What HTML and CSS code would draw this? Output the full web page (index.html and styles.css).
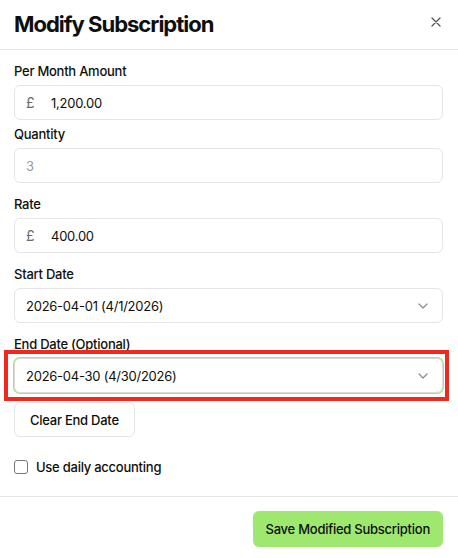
FILE: index.html
```html
<!DOCTYPE html>
<html lang="en">
  <head>
    <meta charset="utf-8">
    <meta name="viewport" content="width=device-width, initial-scale=1">
    <title>Modify Subscription</title>
    <link rel="stylesheet" href="styles.css">
  </head>
  <body>
    <div class="modal">
      <header class="modal-header">
        <h2>Modify Subscription</h2>
        <button class="close" aria-label="Close">
          <svg width="10" height="10" viewBox="0 0 10 10">
            <path d="M1 1 L9 9 M9 1 L1 9" stroke="currentColor" stroke-width="1.3" stroke-linecap="round"/>
          </svg>
        </button>
      </header>

      <div class="modal-body">
        <div class="field">
          <label>Per Month Amount</label>
          <div class="input">
            <span class="prefix">£</span>
            <span class="value">1,200.00</span>
          </div>
        </div>

        <div class="field field-tight">
          <label>Quantity</label>
          <div class="input">
            <span class="value muted">3</span>
          </div>
        </div>

        <div class="field">
          <label>Rate</label>
          <div class="input">
            <span class="prefix">£</span>
            <span class="value">400.00</span>
          </div>
        </div>

        <div class="field">
          <label>Start Date</label>
          <div class="input select">
            <span class="value">2026-04-01 (4/1/2026)</span>
            <svg class="chevron" width="10" height="6" viewBox="0 0 10 6">
              <path d="M1 1 L5 5 L9 1" fill="none" stroke="currentColor" stroke-width="1.2" stroke-linecap="round" stroke-linejoin="round"/>
            </svg>
          </div>
        </div>

        <div class="field">
          <label>End Date (Optional)</label>
          <div class="highlight">
            <div class="input select focused">
              <span class="value">2026-04-30 (4/30/2026)</span>
              <svg class="chevron" width="10" height="6" viewBox="0 0 10 6">
                <path d="M1 1 L5 5 L9 1" fill="none" stroke="currentColor" stroke-width="1.2" stroke-linecap="round" stroke-linejoin="round"/>
              </svg>
            </div>
          </div>
        </div>

        <button class="btn btn-secondary">Clear End Date</button>

        <label class="check">
          <span class="box"></span>
          Use daily accounting
        </label>
      </div>

      <footer class="modal-footer">
        <button class="btn btn-primary">Save Modified Subscription</button>
      </footer>
    </div>
  </body>
</html>
```

FILE: styles.css
```css
:root {
  font-family: Inter, "Noto Sans", sans-serif;
  color: #0e0f0c;
  font-size: 13px;
  letter-spacing: -0.25px;
}

body {
  margin: 0;
  padding: 0;
  background: #fff;
}

.modal {
  width: 458px;
  background: #fff;
}

.modal-header {
  display: flex;
  align-items: center;
  justify-content: space-between;
  height: 49px;
  padding: 0 14px;
  border-bottom: 1px solid #e6e6e6;
}
.modal-header h2 {
  margin: 0;
  font-size: 22px;
  font-weight: 700;
  letter-spacing: -1px;
  padding-bottom: 2px;
}
.close {
  border: none;
  background: none;
  padding: 0;
  margin-right: 3px;
  margin-bottom: 6px;
  color: #555;
  display: flex;
}

.modal-body {
  display: flex;
  flex-direction: column;
  align-items: flex-start;
  padding: 12px 15px 20px 14px;
}

.field {
  align-self: stretch;
  display: flex;
  flex-direction: column;
  gap: 5px;
  margin-bottom: 12px;
}
.field-tight {
  margin-top: -7px;
}
.field label {
  font-weight: 500;
  line-height: 18px;
}

.input {
  display: flex;
  align-items: center;
  height: 35px;
  box-sizing: border-box;
  padding: 0 12px 0 11px;
  border: 1px solid #e5e5e5;
  border-radius: 6px;
  background: #fff;
}
.prefix {
  color: #6a6c6a;
  width: 25px;
  font-size: 14px;
}
.muted {
  color: #9a9a9a;
}
.select {
  justify-content: space-between;
}
.chevron {
  color: #8b8b8b;
  margin-right: 2px;
}
.focused {
  box-shadow: 0 0 0 1px #9fe870;
  border-color: #dcdcdc;
}

/* red callout drawn around the end-date picker */
.highlight {
  position: relative;
}
.highlight::after {
  content: "";
  position: absolute;
  left: -10px;
  right: -6px;
  top: -8px;
  bottom: -8px;
  border: 4px solid #f0291c;
  pointer-events: none;
}

.btn {
  font-family: inherit;
  font-size: 13px;
  font-weight: 500;
  letter-spacing: -0.25px;
  color: #0e0f0c;
  height: 35px;
  border-radius: 6px;
  cursor: pointer;
}
.btn-secondary {
  margin-top: -3px;
  padding: 0 15px;
  background: #fff;
  border: 1px solid #e5e5e5;
}
.btn-primary {
  height: 36px;
  padding: 0 13px;
  background: #9fe870;
  border: none;
}

.check {
  display: flex;
  align-items: center;
  gap: 8px;
  margin-top: 21px;
  font-weight: 500;
  line-height: 18px;
}
.box {
  width: 14px;
  height: 14px;
  box-sizing: border-box;
  border: 1px solid #777;
  border-radius: 3px;
}

.modal-footer {
  display: flex;
  justify-content: flex-end;
  padding: 14px 15px 12px;
  border-top: 1px solid #e6e6e6;
}
```
